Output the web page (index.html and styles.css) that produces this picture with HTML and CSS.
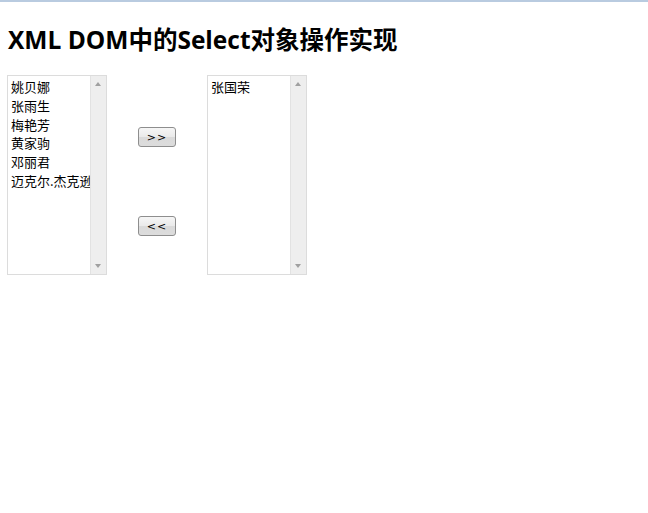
FILE: index.html
```html
<!DOCTYPE html>
<html>
<head>
<meta charset="utf-8">
<link rel="stylesheet" href="styles.css">
</head>
<body>
<div class="topline"></div>
<h1 class="title">XML DOM中的Select对象操作实现</h1>
<div class="row">
  <div class="listbox">
    <div class="items">
      <div class="item">姚贝娜</div>
      <div class="item">张雨生</div>
      <div class="item">梅艳芳</div>
      <div class="item">黄家驹</div>
      <div class="item">邓丽君</div>
      <div class="item">迈克尔.杰克逊</div>
    </div>
    <div class="scrollbar"><span class="arrow up"></span><span class="arrow down"></span></div>
  </div>
  <div class="buttons">
    <button class="btn">&gt;&gt;</button>
    <button class="btn">&lt;&lt;</button>
  </div>
  <div class="listbox">
    <div class="items">
      <div class="item">张国荣</div>
    </div>
    <div class="scrollbar"><span class="arrow up"></span><span class="arrow down"></span></div>
  </div>
</div>
</body>
</html>
```
FILE: styles.css
```css
html, body { margin: 0; padding: 0; background: #fff; }
body { font-family: "Noto Sans CJK SC", "Noto Sans", sans-serif; color: #000; }
.topline { height: 2px; background: #b9cbe0; }
.title {
  margin: 22px 0 0 8px;
  font-family: "Open Sans", "Noto Sans CJK SC", sans-serif;
  font-weight: bold;
  font-size: 24.5px;
  line-height: 32px;
}
.row { display: flex; margin: 19px 0 0 7px; }
.listbox {
  width: 98px; height: 198px;
  border: 1px solid #dcdcdc;
  display: flex; overflow: hidden;
}
.items { flex: 1; padding: 2px 0 0 3px; overflow: hidden; }
.item { font-size: 13px; line-height: 18.8px; white-space: nowrap; }
.scrollbar {
  width: 15px; background: #eeeeee; border-left: 1px solid #e2e2e2;
  position: relative;
}
.arrow { position: absolute; left: 4px; width: 0; height: 0; border-left: 3.5px solid transparent; border-right: 3.5px solid transparent; }
.arrow.up { top: 6px; border-bottom: 4px solid #a0a0a0; }
.arrow.down { bottom: 6px; border-top: 4px solid #a0a0a0; }
.buttons { display: flex; flex-direction: column; align-items: flex-start; padding: 52px 0 0 31px; gap: 69px; width: 69px; }
.btn {
  width: 38px; height: 20px; padding: 0;
  border: 1px solid #8e8e8e; border-radius: 3px;
  background: linear-gradient(#f6f6f6 0%, #eaeaea 50%, #dadada 51%, #dcdcdc 100%);
  font-family: "DejaVu Sans", sans-serif; font-size: 11px; color: #000;
  letter-spacing: 1px;
}
```
